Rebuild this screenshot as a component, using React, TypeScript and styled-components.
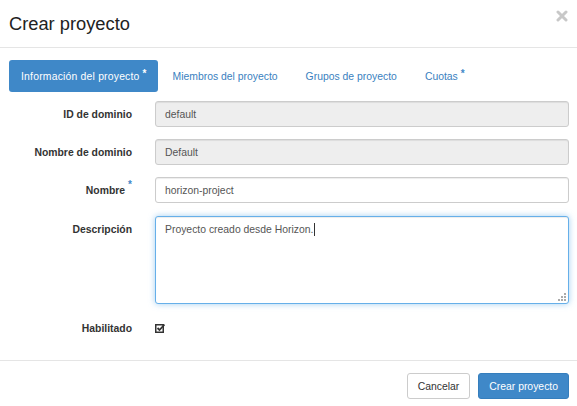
import React from "react";
import styled, { createGlobalStyle } from "styled-components";

const FS = "10.4px";

const Global = createGlobalStyle`
  html, body { margin: 0; padding: 0; background: #fff; }
  body { font-family: "Liberation Sans", Arial, Helvetica, sans-serif; color: #333; font-size: ${FS}; }
  * { box-sizing: border-box; }
`;

const Modal = styled.div`
  width: 577px;
  height: 406px;
  display: flex;
  flex-direction: column;
  background: #fff;
`;

const Header = styled.div`
  height: 48px;
  border-bottom: 1px solid #e5e5e5;
  display: flex;
  align-items: center;
  padding: 0 9px;
  position: relative;
`;

const Title = styled.h4`
  margin: 0;
  font-size: 18.3px;
  font-weight: normal;
  color: #222;
  line-height: 20px;
`;

const Close = styled.button`
  position: absolute;
  top: 10px;
  right: 9px;
  border: 0;
  background: none;
  padding: 0;
  width: 12px;
  height: 12px;
  display: flex;
`;

const Body = styled.div`
  flex: 1;
  padding: 12px 8px 0 9px;
  display: flex;
  flex-direction: column;
`;

const Tabs = styled.ul`
  list-style: none;
  margin: 0 0 9px 0;
  padding: 0;
  display: flex;
`;

const Tab = styled.li<{ $active?: boolean }>`
  height: 32px;
  display: flex;
  align-items: center;
  flex: none;
  width: ${(p) => (p.$active ? "149px" : "auto")};
  padding: ${(p) => (p.$active ? "0 0 0 12px" : "0 13.5px 0 14.5px")};
  letter-spacing: ${(p) => (p.$active ? "0.2px" : "0")};
  border-radius: 3px;
  background: ${(p) => (p.$active ? "#3f88c8" : "transparent")};
  color: ${(p) => (p.$active ? "#fff" : "#3a7fc0")};
  font-size: ${FS};
  white-space: nowrap;
`;

const Star = styled.sup<{ $light?: boolean }>`
  color: ${(p) => (p.$light ? "#fff" : "#3f88c8")};
  font-size: 10px;
  font-weight: bold;
  position: relative;
  top: -2px;
  margin-left: 3px;
  line-height: 0;
  letter-spacing: 0;
`;

const Row = styled.div<{ $mb?: number }>`
  display: grid;
  grid-template-columns: 123px 414px;
  column-gap: 23px;
  margin-bottom: ${(p) => p.$mb ?? 12}px;
`;

const Label = styled.label<{ $pt?: number }>`
  text-align: right;
  font-weight: bold;
  font-size: ${FS};
  color: #333;
  padding-top: ${(p) => p.$pt ?? 7}px;
  line-height: 13px;
`;

const Input = styled.div<{ $disabled?: boolean }>`
  height: 26px;
  border: 1px solid #ccc;
  border-radius: 3px;
  background: ${(p) => (p.$disabled ? "#eee" : "#fff")};
  color: #555;
  font-size: ${FS};
  padding: 0 9px;
  display: flex;
  align-items: center;
  box-shadow: inset 0 1px 1px rgba(0, 0, 0, 0.075);
`;

const TextArea = styled.div`
  height: 88px;
  border: 1px solid #66afe9;
  border-radius: 3px;
  background: #fff;
  color: #555;
  font-size: ${FS};
  padding: 6px 9px;
  position: relative;
  box-shadow: inset 0 1px 1px rgba(0, 0, 0, 0.075), 0 0 6px rgba(102, 175, 233, 0.6);
`;

const Caret = styled.span`
  display: inline-block;
  width: 1px;
  height: 13px;
  background: #333;
  vertical-align: -3px;
  margin-left: 1px;
`;

const Grip = styled.svg`
  position: absolute;
  right: 2px;
  bottom: 2px;
`;

const Check = styled.div`
  padding-top: 6px;
  height: 20px;
`;

const Footer = styled.div`
  border-top: 1px solid #e5e5e5;
  flex: 0 0 46px;
  display: flex;
  justify-content: flex-end;
  align-items: flex-start;
  gap: 8px;
  padding: 12px 8px 0 0;
`;

const Button = styled.button<{ $primary?: boolean }>`
  height: 26px;
  padding: 0 10px;
  border-radius: 3px;
  font-family: inherit;
  font-size: ${FS};
  border: 1px solid ${(p) => (p.$primary ? "#357ebd" : "#ccc")};
  background: ${(p) => (p.$primary ? "#3f88c8" : "#fff")};
  color: ${(p) => (p.$primary ? "#fff" : "#333")};
`;

export default function App() {
  return (
    <>
      <Global />
      <Modal>
        <Header>
          <Title>Crear proyecto</Title>
          <Close aria-label="Cerrar">
            <svg width="12" height="12" viewBox="0 0 12 12">
              <path d="M2 2 L10 10 M10 2 L2 10" stroke="#c8c8c8" strokeWidth="3" strokeLinecap="round" />
            </svg>
          </Close>
        </Header>
        <Body>
          <Tabs>
            <Tab $active>
              Información del proyecto<Star $light>*</Star>
            </Tab>
            <Tab>Miembros del proyecto</Tab>
            <Tab>Grupos de proyecto</Tab>
            <Tab>
              Cuotas<Star>*</Star>
            </Tab>
          </Tabs>
          <Row>
            <Label>ID de dominio</Label>
            <Input $disabled>default</Input>
          </Row>
          <Row>
            <Label>Nombre de dominio</Label>
            <Input $disabled>Default</Input>
          </Row>
          <Row $mb={13}>
            <Label>
              Nombre<Star>*</Star>
            </Label>
            <Input>horizon-project</Input>
          </Row>
          <Row $mb={13}>
            <Label>Descripción</Label>
            <TextArea>
              Proyecto creado desde Horizon.<Caret />
              <Grip width="8" height="8" viewBox="0 0 8 8">
                <rect x="6" y="0" width="2" height="2" fill="#aaa" />
                <rect x="3" y="3" width="2" height="2" fill="#aaa" />
                <rect x="6" y="3" width="2" height="2" fill="#aaa" />
                <rect x="0" y="6" width="2" height="2" fill="#aaa" />
                <rect x="3" y="6" width="2" height="2" fill="#aaa" />
                <rect x="6" y="6" width="2" height="2" fill="#aaa" />
              </Grip>
            </TextArea>
          </Row>
          <Row>
            <Label $pt={5}>Habilitado</Label>
            <Check>
              <svg width="10" height="10" viewBox="0 0 10 10">
                <rect x="0.75" y="1.75" width="7.5" height="7.5" fill="none" stroke="#333" strokeWidth="1.5" />
                <path d="M2.5 5 L4.5 7 L9.5 1.5" fill="none" stroke="#333" strokeWidth="1.8" />
              </svg>
            </Check>
          </Row>
        </Body>
        <Footer>
          <Button>Cancelar</Button>
          <Button $primary>Crear proyecto</Button>
        </Footer>
      </Modal>
    </>
  );
}
